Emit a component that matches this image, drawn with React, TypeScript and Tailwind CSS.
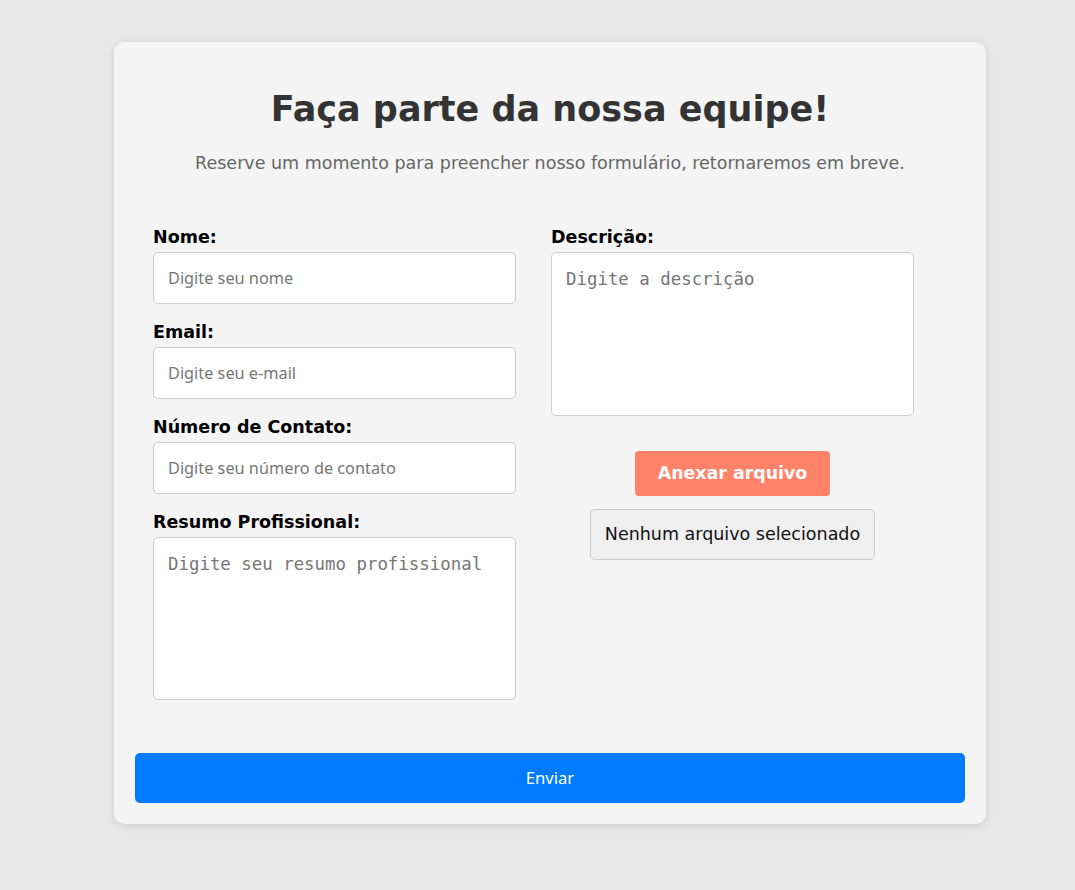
import React from "react";

const labelCls = "block text-[17.5px] leading-[20px] font-bold text-black mb-[5px] [font-family:'DejaVu_Sans',sans-serif]";
const inputCls = "block w-full h-[52px] bg-white border border-[#cccccc] rounded-[5px] px-[14px] text-[16.3px] text-[#333] placeholder:text-[#767676] outline-none [font-family:'Noto_Sans',sans-serif]";
const taCls = "block w-full bg-white border border-[#cccccc] rounded-[5px] px-[14px] pt-[15px] pb-[14px] text-[17.4px] leading-[22px] text-[#333] placeholder:text-[#767676] outline-none resize-none [font-family:'DejaVu_Sans_Mono',monospace]";

export default function App() {
  return (
    <div className="min-h-[890px] bg-[#e8e8e8] pt-[42px] [font-family:'DejaVu_Sans',sans-serif]">
      <div className="w-[872px] ml-[114px] bg-[#f4f4f4] rounded-[10px] shadow-[0_2px_8px_rgba(0,0,0,0.12)] px-[21px] pt-[46px] pb-[21px]">
        <h1 className="text-center text-[35px] leading-[42px] font-bold text-[#333333]">Faça parte da nossa equipe!</h1>
        <p className="text-center text-[17.5px] leading-[20px] text-[#666666] mt-[23px]">
          Reserve um momento para preencher nosso formulário, retornaremos em breve.
        </p>
        <div className="flex gap-[35px] pl-[18px] mt-[54px]">
          <div className="w-[363px] flex flex-col gap-[18px]">
            <div>
              <label className={labelCls}>Nome:</label>
              <input className={inputCls} placeholder="Digite seu nome" />
            </div>
            <div>
              <label className={labelCls}>Email:</label>
              <input className={inputCls} placeholder="Digite seu e-mail" />
            </div>
            <div>
              <label className={labelCls}>Número de Contato:</label>
              <input className={inputCls} placeholder="Digite seu número de contato" />
            </div>
            <div>
              <label className={labelCls}>Resumo Profissional:</label>
              <textarea className={taCls + " h-[163px]"} placeholder="Digite seu resumo profissional" />
            </div>
          </div>
          <div className="w-[363px] flex flex-col">
            <label className={labelCls}>Descrição:</label>
            <textarea className={taCls + " h-[164px]"} placeholder="Digite a descrição" />
            <div className="flex flex-col items-center mt-[35px]">
              <button className="w-[195px] h-[45px] rounded-[4px] bg-[#ff8269] text-white text-[17.4px] font-bold">
                Anexar arquivo
              </button>
              <div className="mt-[13px] w-[285px] h-[51px] flex items-center justify-center rounded-[5px] border border-[#cccccc] bg-[#efefef] text-[17.5px] text-[#111]">
                Nenhum arquivo selecionado
              </div>
            </div>
          </div>
        </div>
        <button className="mt-[53px] w-full h-[50px] rounded-[5px] bg-[#007bff] text-white text-[16.6px] [font-family:'Noto_Sans',sans-serif]">
          Enviar
        </button>
      </div>
    </div>
  );
}
